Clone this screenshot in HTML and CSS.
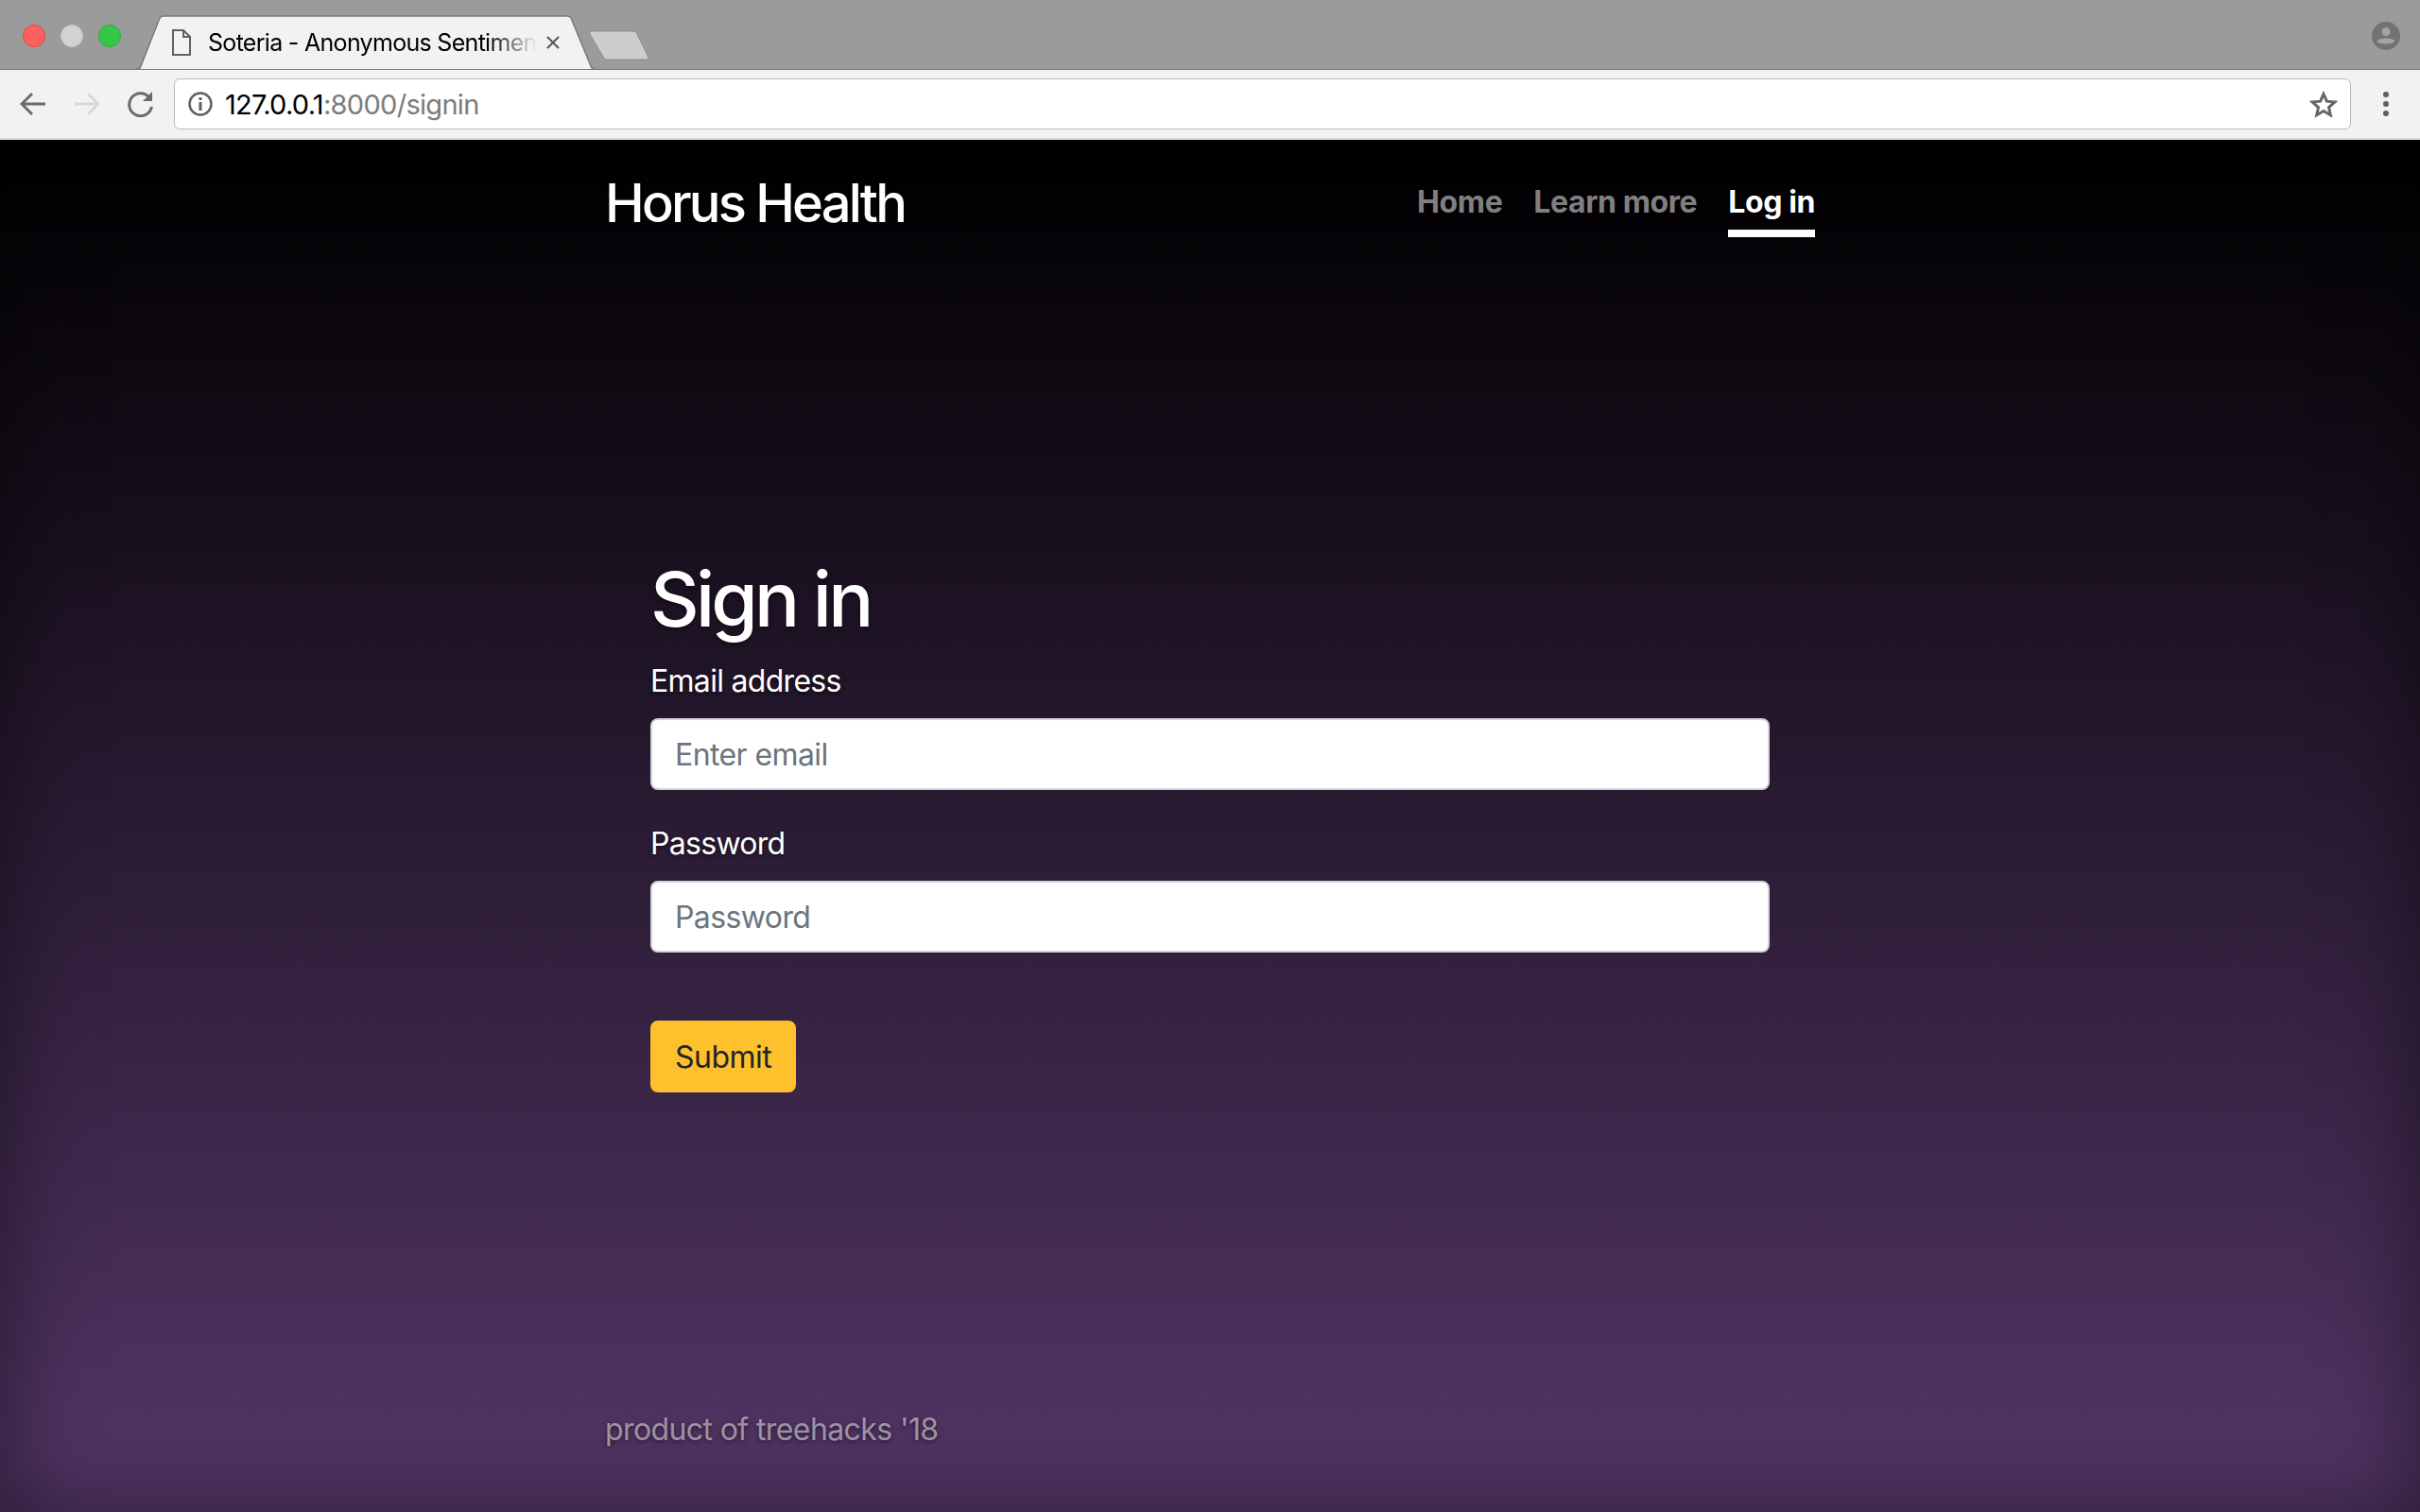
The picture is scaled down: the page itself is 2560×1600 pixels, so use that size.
FILE: index.html
```html
<!DOCTYPE html>
<html lang="en">
<head>
    <meta charset="UTF-8">
    <title>Soteria - Anonymous Sentiment</title>
    <link rel="stylesheet" href="styles.css">
</head>
<body>
    <div class="browser">
        <div class="tabstrip">
            <div class="lights">
                <span class="light red"></span>
                <span class="light grey"></span>
                <span class="light green"></span>
            </div>
            <div class="tab">
                <svg class="tab-shape" width="486" height="58" viewBox="0 0 486 58">
                    <path d="M0 57 L2 57 Q4 57 5 54 L25 3 Q26 1 29 1 L456 1 Q459 1 460 3 L481 54 Q482 57 484 57 L486 57" fill="#f2f2f2" stroke="#7a7a7a" stroke-width="1.5"/>
                </svg>
                <svg class="tab-icon" width="20" height="28" viewBox="0 0 20 28">
                    <path d="M1 1 H12 L19 8 V27 H1 Z M12 1 V8 H19" fill="none" stroke="#5f6368" stroke-width="2"/>
                </svg>
                <span class="tab-title">Soteria - Anonymous Sentiment Analysis</span>
                <svg class="tab-close" width="14" height="14" viewBox="0 0 14 14">
                    <path d="M1 1 L13 13 M13 1 L1 13" stroke="#555" stroke-width="2"/>
                </svg>
            </div>
            <svg class="new-tab" width="66" height="32" viewBox="0 0 66 32">
                <path d="M3 1 H47 Q50 1 51 4 L62 27 Q64 31 60 31 H19 Q16 31 15 28 L1 4 Q0 1 3 1 Z" fill="#cdcdcd" stroke="#8c8c8c"/>
            </svg>
            <svg class="avatar" width="30" height="30" viewBox="0 0 30 30">
                <circle cx="15" cy="15" r="15" fill="#737373"/>
                <circle cx="15" cy="10.5" r="4.5" fill="#a3a3a3"/>
                <path d="M5.5 20.5 C7.5 16.5 22.5 16.5 24.5 20.5 C22.5 24.5 7.5 24.5 5.5 20.5 Z" fill="#a3a3a3"/>
            </svg>
        </div>
        <div class="toolbar">
            <svg class="tool" width="28" height="26" viewBox="0 0 28 26">
                <path d="M27 13 H3 M13 2 L2 13 L13 24" fill="none" stroke="#6b6b6b" stroke-width="3"/>
            </svg>
            <svg class="tool" width="28" height="26" viewBox="0 0 28 26">
                <path d="M1 13 H25 M15 2 L26 13 L15 24" fill="none" stroke="#d8d8d8" stroke-width="3"/>
            </svg>
            <svg class="tool" width="28" height="28" viewBox="0 0 28 28">
                <path d="M23 7 A12 12 0 1 0 25.5 17" fill="none" stroke="#6b6b6b" stroke-width="3"/>
                <path d="M26 1 V11 H16 Z" fill="#6b6b6b"/>
            </svg>
            <div class="omnibox">
                <svg class="info" width="26" height="26" viewBox="0 0 26 26">
                    <circle cx="13" cy="13" r="11.5" fill="none" stroke="#5f5f5f" stroke-width="2.5"/>
                    <path d="M11.5 11 H14.5 V20 H11.5 Z M11.5 6 H14.5 V9 H11.5 Z" fill="#5f5f5f"/>
                </svg>
                <span class="url"><span class="url-host">127.0.0.1</span>:8000/signin</span>
                <svg class="star" width="30" height="29" viewBox="0 0 30 29">
                    <path d="M15 3.5 L18.4 11.2 L26.8 12 L20.5 17.6 L22.3 25.8 L15 21.5 L7.7 25.8 L9.5 17.6 L3.2 12 L11.6 11.2 Z" fill="none" stroke="#666" stroke-width="3"/>
                </svg>
            </div>
            <svg class="menu" width="8" height="28" viewBox="0 0 8 28">
                <circle cx="4" cy="4" r="3" fill="#5f5f5f"/>
                <circle cx="4" cy="14" r="3" fill="#5f5f5f"/>
                <circle cx="4" cy="24" r="3" fill="#5f5f5f"/>
            </svg>
        </div>
    </div>

    <div class="cover">
        <div class="cover-container">
            <header class="masthead">
                <h3 class="brand">Horus Health</h3>
                <nav class="nav">
                    <a class="nav-link" href="#">Home</a>
                    <a class="nav-link" href="#">Learn more</a>
                    <a class="nav-link active" href="#">Log in</a>
                </nav>
            </header>

            <main class="content">
                <h1 class="title">Sign in</h1>
                <form>
                    <div class="form-group">
                        <label for="email">Email address</label>
                        <input id="email" type="email" placeholder="Enter email">
                    </div>
                    <div class="form-group">
                        <label for="password">Password</label>
                        <input id="password" type="password" placeholder="Password">
                    </div>
                    <button class="btn" type="submit">Submit</button>
                </form>
            </main>

            <footer class="mastfoot">product of treehacks '18</footer>
        </div>
    </div>
</body>
</html>
```

FILE: styles.css
```css
* {
    box-sizing: border-box;
    margin: 0;
    padding: 0;
}

html, body {
    height: 100%;
}

body {
    display: flex;
    flex-direction: column;
    font-family: 'Inter', 'Liberation Sans', sans-serif;
    background: #000;
    overflow: hidden;
}

/* Browser window */
.browser {
    flex: none;
    height: 148px;
}

.tabstrip {
    display: flex;
    height: 74px;
    background-color: #9b9b9b;
    border-bottom: 1px solid #7a7a7a;
    position: relative;
}

.lights {
    display: flex;
    gap: 16px;
    padding: 26px 0 0 24px;
    width: 144px;
}

.light {
    width: 24px;
    height: 24px;
    border-radius: 50%;
}

.light.red {
    background-color: #fc615d;
    border: 1px solid #df4744;
}

.light.grey {
    background-color: #d2d2d2;
    border: 1px solid #c4c4c4;
}

.light.green {
    background-color: #34c84a;
    border: 1px solid #2dac2f;
}

.tab {
    position: relative;
    width: 484px;
    height: 58px;
    margin-top: 16px;
    display: flex;
    align-items: center;
}

.tab-shape {
    position: absolute;
    left: 0;
    top: 0;
}

.tab-icon {
    position: relative;
    margin-left: 38px;
    flex: none;
}

.tab-title {
    position: relative;
    margin-left: 18px;
    width: 348px;
    flex: none;
    font-size: 25px;
    letter-spacing: -0.7px;
    color: #000;
    white-space: nowrap;
    overflow: hidden;
    -webkit-mask-image: linear-gradient(to right, #000 85%, transparent 100%);
    mask-image: linear-gradient(to right, #000 85%, transparent 100%);
}

.tab-close {
    position: relative;
    margin-left: 10px;
    flex: none;
}

.new-tab {
    margin: 32px 0 0 -5px;
    flex: none;
}

.avatar {
    margin: 23px 21px 0 auto;
    flex: none;
}

.toolbar {
    display: flex;
    align-items: center;
    height: 74px;
    background-color: #f2f2f2;
    border-bottom: 2px solid #dcdcdc;
    padding: 0 32px 0 21px;
}

.tool {
    flex: none;
    margin-right: 29px;
}

.tool:nth-child(3) {
    margin-right: 21px;
}

.omnibox {
    flex: 1;
    height: 54px;
    display: flex;
    align-items: center;
    background-color: #fff;
    border: 1px solid #b9b9b9;
    border-radius: 6px;
    padding: 0 13px 0 14px;
}

.info {
    flex: none;
}

.url {
    margin-left: 13px;
    font-size: 29px;
    letter-spacing: -0.7px;
    color: #7b7b7b;
}

.url-host {
    color: #000;
}

.star {
    margin-left: auto;
}

.menu {
    flex: none;
    margin-left: 33px;
}

/* Page */
.cover {
    flex: 1;
    background: linear-gradient(to bottom, #000 0%, #543667 100%);
    box-shadow: inset 0 0 100px rgba(0, 0, 0, 0.5);
    color: #fff;
    text-shadow: 0 2px 4px rgba(0, 0, 0, 0.5);
}

.cover-container {
    width: 1280px;
    height: 100%;
    margin: 0 auto;
    display: flex;
    flex-direction: column;
}

.masthead {
    display: flex;
    justify-content: space-between;
    align-items: flex-start;
    padding-top: 34px;
}

.brand {
    font-size: 56px;
    line-height: 67px;
    font-weight: 500;
    letter-spacing: -2.8px;
}

.nav {
    display: flex;
    gap: 33px;
}

.nav-link {
    font-size: 32px;
    line-height: 48px;
    font-weight: 700;
    letter-spacing: -0.4px;
    color: rgba(255, 255, 255, 0.5);
    text-decoration: none;
    padding: 8px 0 5px;
    border-bottom: 8px solid transparent;
}

.nav-link.active {
    color: #fff;
    border-bottom-color: #fff;
}

.content {
    flex: 1;
    padding: 0 48px;
    margin-top: 335px;
}

.title {
    font-size: 80px;
    line-height: 96px;
    font-weight: 500;
    letter-spacing: -3.8px;
    margin-bottom: 14px;
}

.form-group {
    margin-bottom: 32px;
}

label {
    display: block;
    font-size: 32px;
    line-height: 48px;
    letter-spacing: -0.7px;
    padding-top: 1px;
    margin-bottom: 15px;
}

input {
    display: block;
    width: 100%;
    height: 76px;
    padding: 12px 24px;
    font-family: inherit;
    font-size: 32px;
    letter-spacing: -0.6px;
    color: #495057;
    background-color: #fff;
    border: 2px solid #ced4da;
    border-radius: 8px;
}

input::placeholder {
    color: #6c757d;
    opacity: 1;
}

.btn {
    display: block;
    margin-top: 72px;
    height: 76px;
    padding: 12px 24px;
    font-family: inherit;
    font-size: 32px;
    letter-spacing: -0.5px;
    color: #212529;
    background-color: #ffc02e;
    border: 2px solid #ffc02e;
    border-radius: 8px;
}

.mastfoot {
    font-size: 32px;
    line-height: 48px;
    letter-spacing: -0.6px;
    color: rgba(255, 255, 255, 0.5);
    padding-bottom: 63px;
}
```
